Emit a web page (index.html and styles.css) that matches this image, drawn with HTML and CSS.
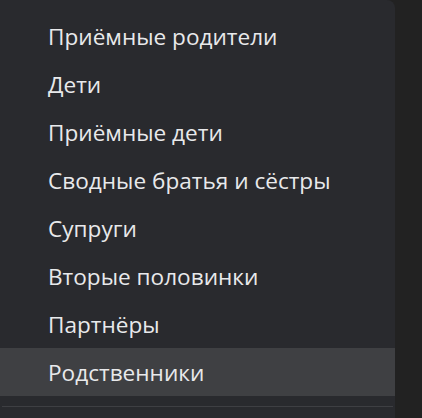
FILE: index.html
```html
<!DOCTYPE html>
<html lang="ru">
<head>
<meta charset="utf-8">
<link rel="stylesheet" href="styles.css">
</head>
<body>
<div class="menu">
  <ul class="list">
    <li class="item">Приёмные родители</li>
    <li class="item">Дети</li>
    <li class="item">Приёмные дети</li>
    <li class="item">Сводные братья и сёстры</li>
    <li class="item">Супруги</li>
    <li class="item">Вторые половинки</li>
    <li class="item">Партнёры</li>
    <li class="item active">Родственники</li>
  </ul>
  <div class="sep"></div>
</div>
</body>
</html>
```
FILE: styles.css
```css
html, body {
  margin: 0;
  padding: 0;
  background: #222222;
  height: 100%;
  overflow: hidden;
}
.menu {
  width: 395px;
  height: 418px;
  background: #292a2e;
  border-radius: 0 8px 0 0;
  padding-top: 12px;
  box-sizing: border-box;
  font-family: "Open Sans", "Noto Sans", sans-serif;
  font-size: 22.6px;
  color: #e8e9eb;
}
.list {
  list-style: none;
  margin: 0;
  padding: 0;
}
.item {
  height: 48px;
  display: flex;
  align-items: center;
  padding-left: 48px;
  white-space: nowrap;
}
.item.active {
  background: #3f4043;
}
.sep {
  margin: 10px 2px 0 2px;
  height: 1px;
  background: #3e3f43;
}
```
